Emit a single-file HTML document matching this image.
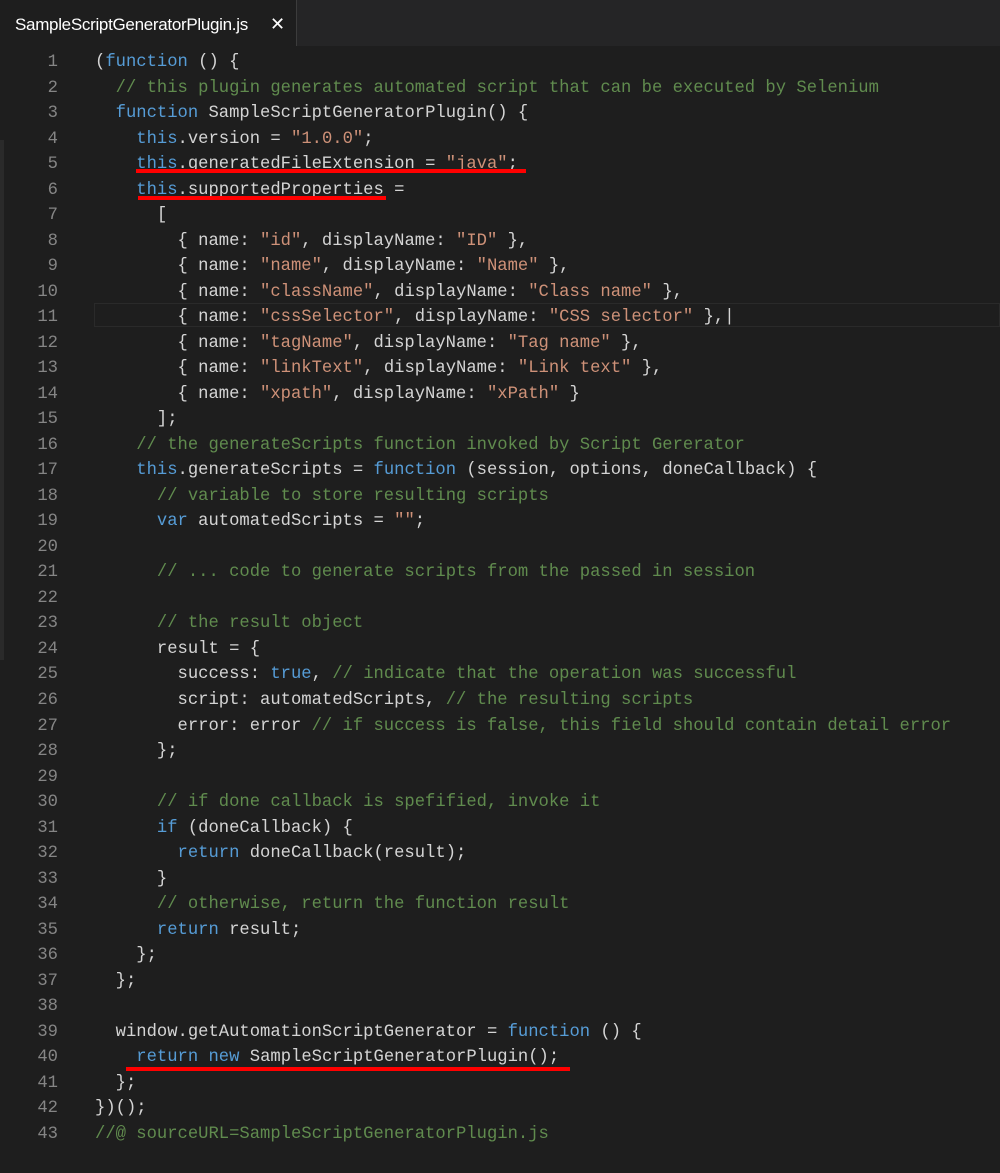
<!DOCTYPE html>
<html><head><meta charset="utf-8"><style>
html,body{margin:0;padding:0;width:1000px;height:1162px;background:#1e1e1e;overflow:hidden}
.tabbar{position:absolute;left:0;top:0;width:1000px;height:46px;background:#252526}
.tab{position:absolute;left:0;top:0;width:296px;height:46px;background:#1e1e1e;border-right:1px solid #3c3c3c}
.tab span{position:absolute;left:15px;top:15px;font:17px "Liberation Sans",sans-serif;color:#fff;letter-spacing:-0.3px}
.tab b{position:absolute;left:270px;top:14px;font:bold 18px "DejaVu Sans",sans-serif;color:#fff}
.hl{position:absolute;left:94px;top:303px;width:906px;height:24px;border:1px solid #2a2a2a;box-sizing:border-box}
.code{position:absolute;left:0;top:50px;font:17.2px/25.52px "Liberation Mono",monospace;color:#d4d4d4;white-space:pre}
.ln{position:absolute;left:0;width:58px;text-align:right;color:#858585}
.tx{position:absolute;left:95px}
.k{color:#569cd6}.s{color:#ce9178}.c{color:#608b4e}
.u{position:absolute;height:4px;background:#f00}
.sb{position:absolute;left:0;top:140px;width:4px;height:520px;background:#2a2a2a}
</style></head><body>
<div class="tabbar"><div class="tab"><span>SampleScriptGeneratorPlugin.js</span><b>✕</b></div></div>
<div class="sb"></div>
<div class="hl"></div>
<div class="code" id="c">
<div class="ln" style="top:0">1</div><div class="tx" style="top:0">(<span class="k">function</span> () {</div>
<div class="ln" style="top:25.52px">2</div><div class="tx" style="top:25.52px">  <span class="c">// this plugin generates automated script that can be executed by Selenium</span></div>
<div class="ln" style="top:51.04px">3</div><div class="tx" style="top:51.04px">  <span class="k">function</span> SampleScriptGeneratorPlugin() {</div>
<div class="ln" style="top:76.56px">4</div><div class="tx" style="top:76.56px">    <span class="k">this</span>.version = <span class="s">"1.0.0"</span>;</div>
<div class="ln" style="top:102.08px">5</div><div class="tx" style="top:102.08px">    <span class="k">this</span>.generatedFileExtension = <span class="s">"java"</span>;</div>
<div class="ln" style="top:127.6px">6</div><div class="tx" style="top:127.6px">    <span class="k">this</span>.supportedProperties =</div>
<div class="ln" style="top:153.12px">7</div><div class="tx" style="top:153.12px">      [</div>
<div class="ln" style="top:178.64px">8</div><div class="tx" style="top:178.64px">        { name: <span class="s">"id"</span>, displayName: <span class="s">"ID"</span> },</div>
<div class="ln" style="top:204.16px">9</div><div class="tx" style="top:204.16px">        { name: <span class="s">"name"</span>, displayName: <span class="s">"Name"</span> },</div>
<div class="ln" style="top:229.68px">10</div><div class="tx" style="top:229.68px">        { name: <span class="s">"className"</span>, displayName: <span class="s">"Class name"</span> },</div>
<div class="ln" style="top:255.2px">11</div><div class="tx" style="top:255.2px">        { name: <span class="s">"cssSelector"</span>, displayName: <span class="s">"CSS selector"</span> },|</div>
<div class="ln" style="top:280.72px">12</div><div class="tx" style="top:280.72px">        { name: <span class="s">"tagName"</span>, displayName: <span class="s">"Tag name"</span> },</div>
<div class="ln" style="top:306.24px">13</div><div class="tx" style="top:306.24px">        { name: <span class="s">"linkText"</span>, displayName: <span class="s">"Link text"</span> },</div>
<div class="ln" style="top:331.76px">14</div><div class="tx" style="top:331.76px">        { name: <span class="s">"xpath"</span>, displayName: <span class="s">"xPath"</span> }</div>
<div class="ln" style="top:357.28px">15</div><div class="tx" style="top:357.28px">      ];</div>
<div class="ln" style="top:382.8px">16</div><div class="tx" style="top:382.8px">    <span class="c">// the generateScripts function invoked by Script Gererator</span></div>
<div class="ln" style="top:408.32px">17</div><div class="tx" style="top:408.32px">    <span class="k">this</span>.generateScripts = <span class="k">function</span> (session, options, doneCallback) {</div>
<div class="ln" style="top:433.84px">18</div><div class="tx" style="top:433.84px">      <span class="c">// variable to store resulting scripts</span></div>
<div class="ln" style="top:459.36px">19</div><div class="tx" style="top:459.36px">      <span class="k">var</span> automatedScripts = <span class="s">""</span>;</div>
<div class="ln" style="top:484.88px">20</div>
<div class="ln" style="top:510.4px">21</div><div class="tx" style="top:510.4px">      <span class="c">// ... code to generate scripts from the passed in session</span></div>
<div class="ln" style="top:535.92px">22</div>
<div class="ln" style="top:561.44px">23</div><div class="tx" style="top:561.44px">      <span class="c">// the result object</span></div>
<div class="ln" style="top:586.96px">24</div><div class="tx" style="top:586.96px">      result = {</div>
<div class="ln" style="top:612.48px">25</div><div class="tx" style="top:612.48px">        success: <span class="k">true</span>, <span class="c">// indicate that the operation was successful</span></div>
<div class="ln" style="top:638px">26</div><div class="tx" style="top:638px">        script: automatedScripts, <span class="c">// the resulting scripts</span></div>
<div class="ln" style="top:663.52px">27</div><div class="tx" style="top:663.52px">        error: error <span class="c">// if success is false, this field should contain detail error</span></div>
<div class="ln" style="top:689.04px">28</div><div class="tx" style="top:689.04px">      };</div>
<div class="ln" style="top:714.56px">29</div>
<div class="ln" style="top:740.08px">30</div><div class="tx" style="top:740.08px">      <span class="c">// if done callback is spefified, invoke it</span></div>
<div class="ln" style="top:765.6px">31</div><div class="tx" style="top:765.6px">      <span class="k">if</span> (doneCallback) {</div>
<div class="ln" style="top:791.12px">32</div><div class="tx" style="top:791.12px">        <span class="k">return</span> doneCallback(result);</div>
<div class="ln" style="top:816.64px">33</div><div class="tx" style="top:816.64px">      }</div>
<div class="ln" style="top:842.16px">34</div><div class="tx" style="top:842.16px">      <span class="c">// otherwise, return the function result</span></div>
<div class="ln" style="top:867.68px">35</div><div class="tx" style="top:867.68px">      <span class="k">return</span> result;</div>
<div class="ln" style="top:893.2px">36</div><div class="tx" style="top:893.2px">    };</div>
<div class="ln" style="top:918.72px">37</div><div class="tx" style="top:918.72px">  };</div>
<div class="ln" style="top:944.24px">38</div>
<div class="ln" style="top:969.76px">39</div><div class="tx" style="top:969.76px">  window.getAutomationScriptGenerator = <span class="k">function</span> () {</div>
<div class="ln" style="top:995.28px">40</div><div class="tx" style="top:995.28px">    <span class="k">return</span> <span class="k">new</span> SampleScriptGeneratorPlugin();</div>
<div class="ln" style="top:1020.8px">41</div><div class="tx" style="top:1020.8px">  };</div>
<div class="ln" style="top:1046.32px">42</div><div class="tx" style="top:1046.32px">})();</div>
<div class="ln" style="top:1071.84px">43</div><div class="tx" style="top:1071.84px"><span class="c">//@ sourceURL=SampleScriptGeneratorPlugin.js</span></div>
</div>
<div class="u" style="left:136px;top:169px;width:390px"></div>
<div class="u" style="left:138px;top:196px;width:248px"></div>
<div class="u" style="left:126px;top:1067px;width:444px"></div>
</body></html>
